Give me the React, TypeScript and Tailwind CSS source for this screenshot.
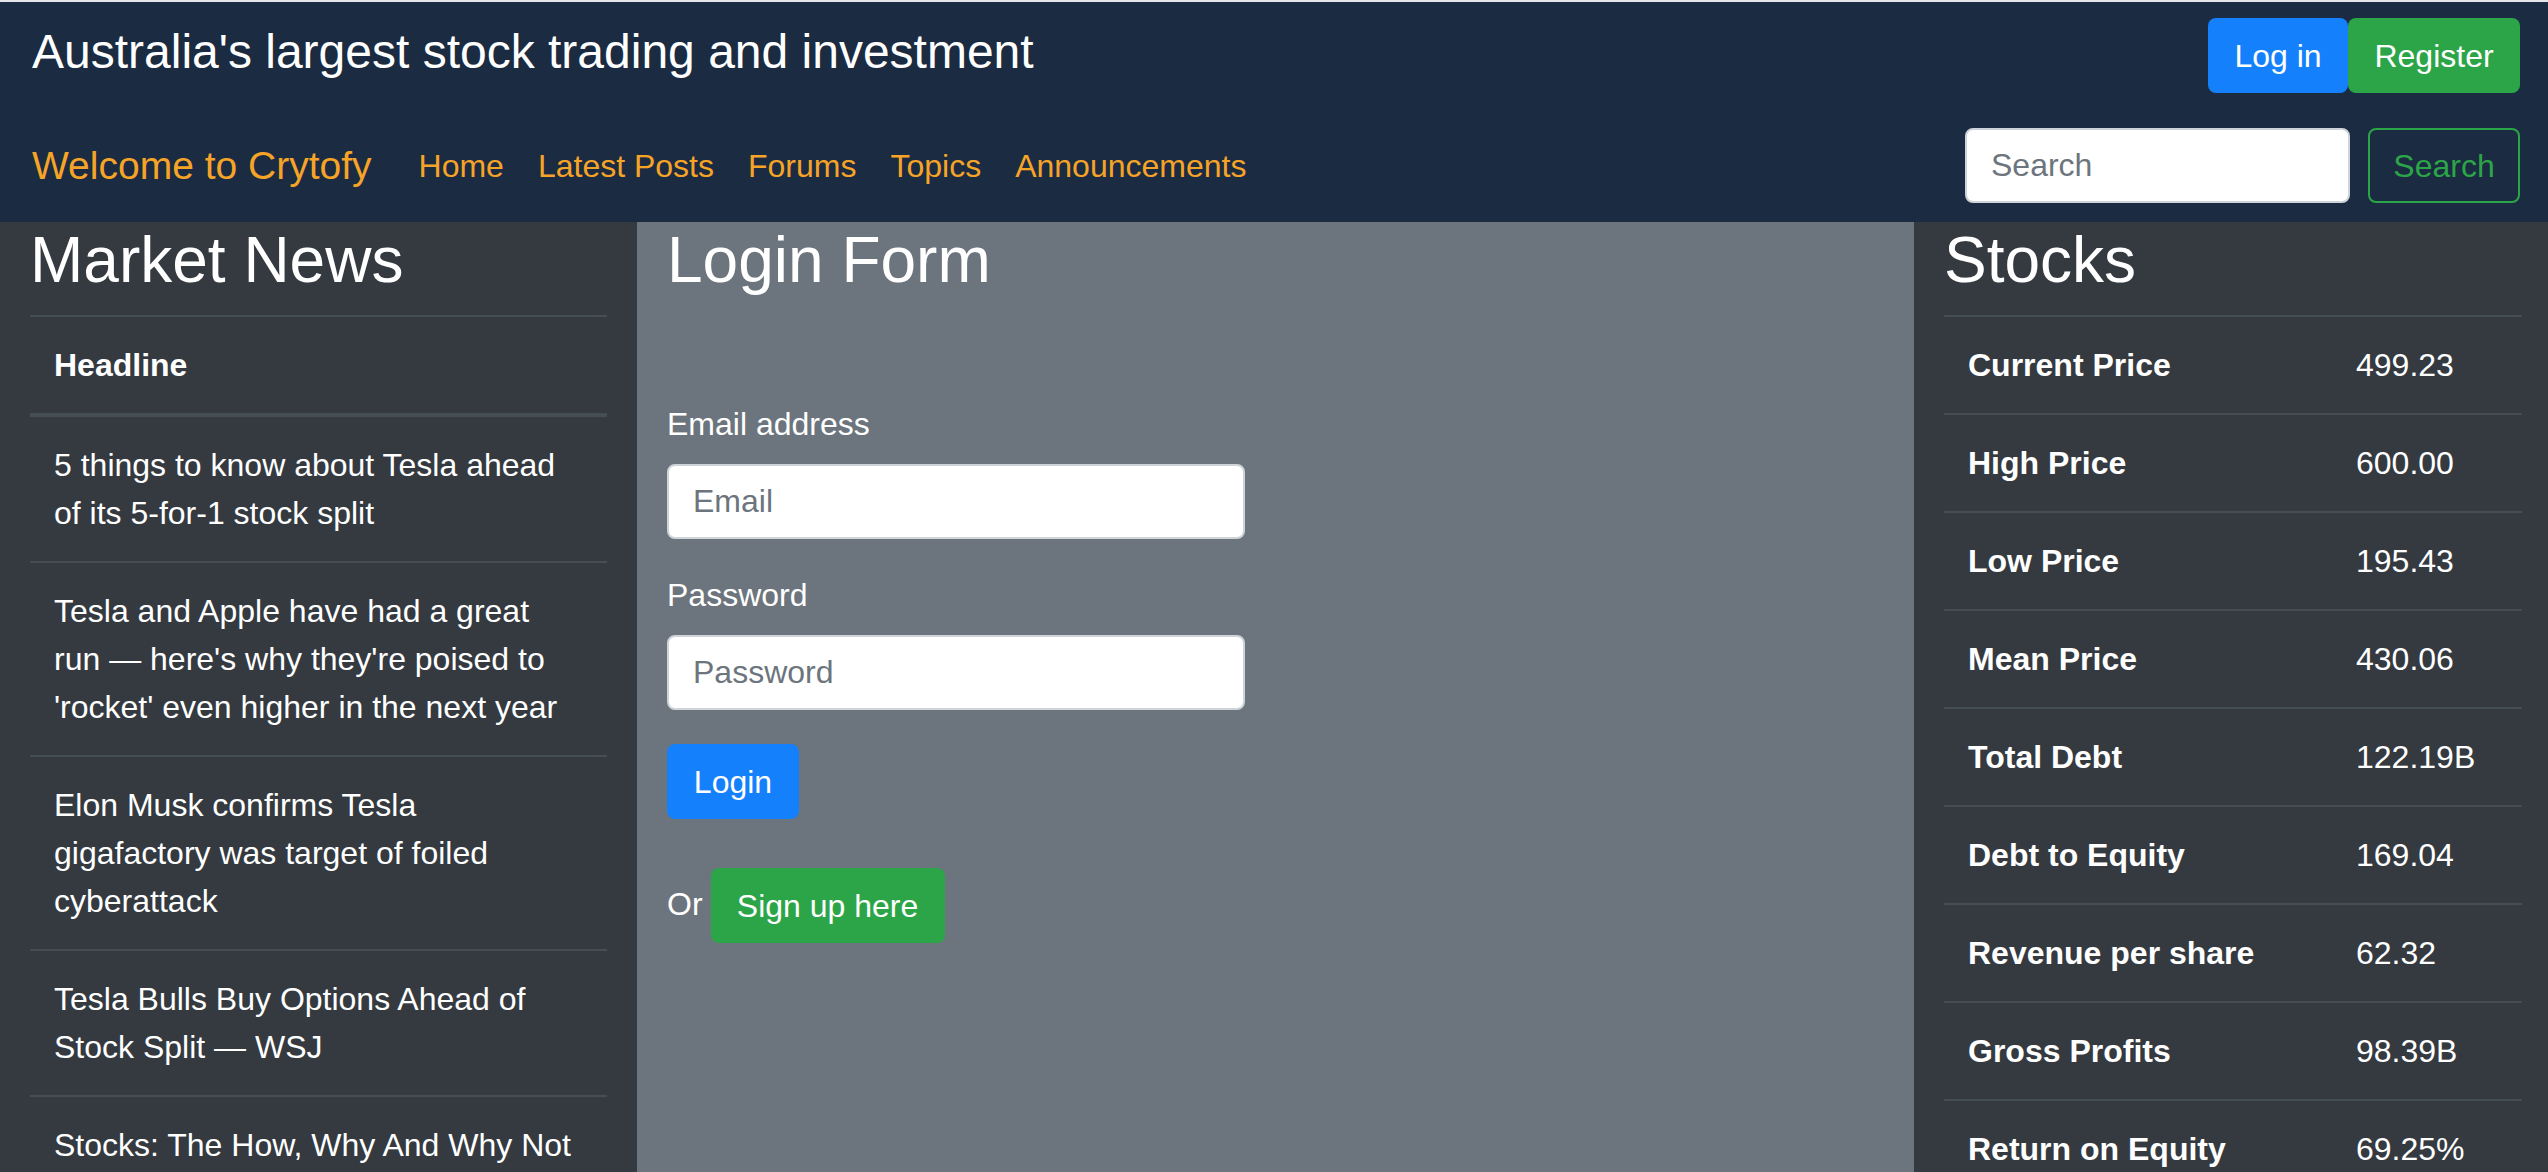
import React from "react";

const news = [
  "5 things to know about Tesla ahead of its 5-for-1 stock split",
  "Tesla and Apple have had a great run — here's why they're poised to 'rocket' even higher in the next year",
  "Elon Musk confirms Tesla gigafactory was target of foiled cyberattack",
  "Tesla Bulls Buy Options Ahead of Stock Split — WSJ",
  "Stocks: The How, Why And Why Not",
];

const stocks: [string, string][] = [
  ["Current Price", "499.23"],
  ["High Price", "600.00"],
  ["Low Price", "195.43"],
  ["Mean Price", "430.06"],
  ["Total Debt", "122.19B"],
  ["Debt to Equity", "169.04"],
  ["Revenue per share", "62.32"],
  ["Gross Profits", "98.39B"],
  ["Return on Equity", "69.25%"],
];

export default function App() {
  return (
    <div className="w-[2548px] h-[1172px] overflow-hidden font-['Liberation_Sans',Arial,sans-serif] text-white">
      <div className="h-[2px] bg-[#e4e6ea]" />
      <header className="h-[220px] bg-[#1b2b41] pl-[32px] pr-[28px] pt-[16px]">
        <div className="flex items-start justify-between h-[75px]">
          <h4 className="mt-[5px] text-[48px] leading-[58px] font-medium text-white">
            Australia's largest stock trading and investment
          </h4>
          <div className="flex">
            <button className="h-[75px] w-[140px] rounded-[8px] bg-[#1580fb] text-[32px] leading-[48px] text-white">
              Log in
            </button>
            <button className="h-[75px] w-[172px] rounded-[8px] bg-[#2ca548] text-[32px] leading-[48px] text-white">
              Register
            </button>
          </div>
        </div>
        <div className="mt-[35px] flex items-center justify-between h-[75px]">
          <nav className="flex items-center">
            <span className="text-[39px] leading-[60px] text-[#f6a428] mr-[30px]">Welcome to Crytofy</span>
            {["Home", "Latest Posts", "Forums", "Topics", "Announcements"].map((l) => (
              <a key={l} className="px-[17px] text-[32px] leading-[48px] text-[#f6a428]">
                {l}
              </a>
            ))}
          </nav>
          <div className="flex items-center">
            <input
              placeholder="Search"
              className="h-[75px] w-[385px] rounded-[8px] border-2 border-[#ced4da] bg-white px-[24px] text-[32px] text-[#495057] placeholder:text-[#6c757d] outline-none mr-[18px]"
            />
            <button className="h-[75px] w-[152px] rounded-[8px] border-2 border-[#2ca548] text-[32px] leading-[48px] text-[#2ca548]">
              Search
            </button>
          </div>
        </div>
      </header>

      <main className="flex min-h-[950px]">
        <section className="w-[637px] bg-[#343a40] px-[30px]">
          <h2 className="text-[64px] leading-[77px] font-medium mb-[16px]">Market News</h2>
          <table className="w-full border-collapse text-[32px] leading-[48px]">
            <thead>
              <tr>
                <th className="text-left font-bold p-[24px] border-t-2 border-b-4 border-[#454d55]">Headline</th>
              </tr>
            </thead>
            <tbody>
              {news.map((n) => (
                <tr key={n}>
                  <td className="py-[24px] pl-[24px] pr-[34px] border-t-2 border-[#454d55] align-top">{n}</td>
                </tr>
              ))}
            </tbody>
          </table>
        </section>

        <section className="w-[1277px] bg-[#6c757d] px-[30px]">
          <h2 className="text-[64px] leading-[77px] font-medium mb-[16px]">Login Form</h2>
          <form className="mt-[101px] w-[578px] text-[32px] leading-[48px]">
            <div className="mb-[32px]">
              <label className="block mb-[16px]">Email address</label>
              <input
                placeholder="Email"
                className="block h-[75px] w-full rounded-[8px] border-2 border-[#ced4da] bg-white px-[24px] text-[32px] text-[#495057] placeholder:text-[#6c757d] outline-none"
              />
            </div>
            <div className="mb-[34px]">
              <label className="block mb-[16px]">Password</label>
              <input
                type="password"
                placeholder="Password"
                className="block h-[75px] w-full rounded-[8px] border-2 border-[#ced4da] bg-white px-[24px] text-[32px] text-[#495057] placeholder:text-[#6c757d] outline-none"
              />
            </div>
            <button type="button" className="block h-[75px] w-[132px] rounded-[8px] bg-[#1580fb] text-white">
              Login
            </button>
            <div className="mt-[49px] flex items-center">
              <span className="mr-[8px] -mt-[4px]">Or</span>
              <button type="button" className="h-[75px] w-[234px] rounded-[8px] bg-[#2ca548] text-white">
                Sign up here
              </button>
            </div>
          </form>
        </section>

        <section className="w-[634px] bg-[#343a40] pl-[30px] pr-[26px]">
          <h2 className="text-[64px] leading-[77px] font-medium mb-[16px]">Stocks</h2>
          <table className="w-full border-collapse text-[32px] leading-[48px]">
            <tbody>
              {stocks.map(([k, v]) => (
                <tr key={k}>
                  <th className="w-[388px] text-left font-bold p-[24px] border-t-2 border-[#454d55]">{k}</th>
                  <td className="p-[24px] border-t-2 border-[#454d55]">{v}</td>
                </tr>
              ))}
            </tbody>
          </table>
        </section>
      </main>
    </div>
  );
}
